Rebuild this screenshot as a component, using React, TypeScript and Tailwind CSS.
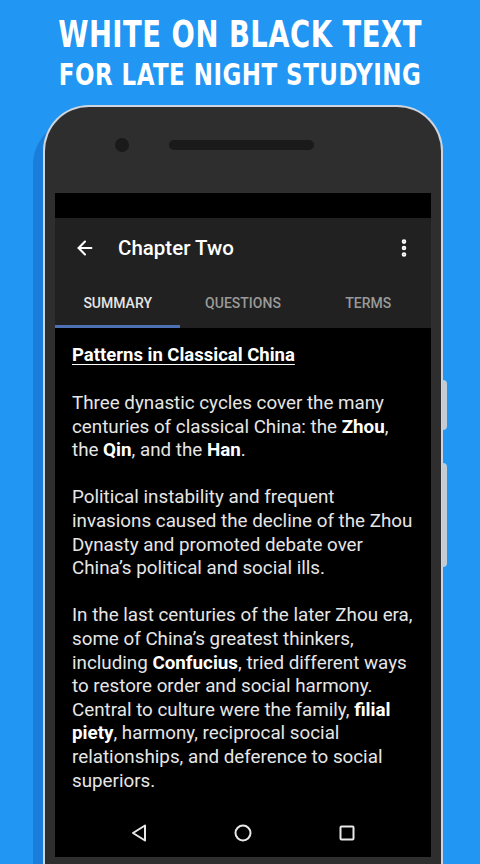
import { ArrowLeft, EllipsisVertical } from 'lucide-react';

const body = { fontFamily: 'Roboto, "Noto Sans", sans-serif' };

function NavBar() {
    return (
        <div className="h-[48px] flex items-center justify-center">
            <div className="w-[104px] flex justify-center">
                <svg width="18" height="20" viewBox="0 0 18 20">
                    <path d="M15 2.5 L3 10 L15 17.5 Z" fill="none" stroke="#e8e8e8" strokeWidth="2" strokeLinejoin="round" />
                </svg>
            </div>
            <div className="w-[104px] flex justify-center">
                <svg width="20" height="20" viewBox="0 0 20 20">
                    <circle cx="10" cy="10" r="7.5" fill="none" stroke="#e8e8e8" strokeWidth="2" />
                </svg>
            </div>
            <div className="w-[104px] flex justify-center">
                <svg width="18" height="18" viewBox="0 0 18 18">
                    <rect x="2.5" y="2.5" width="13" height="13" rx="1" fill="none" stroke="#e8e8e8" strokeWidth="2" />
                </svg>
            </div>
        </div>
    );
}

export default function App() {
    return (
        <div className="w-[480px] h-[864px] overflow-hidden bg-[#2196f3] flex flex-col items-center">
            <h1
                className="pt-[17px] text-white text-center font-bold uppercase"
                style={{ fontFamily: '"DejaVu Sans Condensed", "DejaVu Sans", sans-serif' }}
            >
                <div className="text-[30.5px] leading-[34px] tracking-[0.5px] scale-y-[1.25]">White on Black Text</div>
                <div className="mt-[8px] text-[25.5px] leading-[30px] tracking-[0.5px] scale-y-[1.18]">
                    For Late Night Studying
                </div>
            </h1>

            <div className="relative ml-[6px] mt-[16px] w-[400px] flex-1 rounded-t-[46px] border-2 border-b-0 border-[#cdd6e0] bg-[#2e2e2e] px-[10px] shadow-[-10px_14px_0_0_rgba(13,71,161,0.3)]">
                {/* side buttons */}
                <div className="absolute right-[-6px] top-[273px] w-[5px] h-[50px] rounded-r-sm bg-[#c3cbd4]" />
                <div className="absolute right-[-6px] top-[356px] w-[5px] h-[104px] rounded-r-sm bg-[#c3cbd4]" />

                <div className="h-[86px] flex items-start pt-[31px]">
                    <div className="ml-[60px] w-[14px] h-[14px] rounded-full bg-[#1a1a1a]" />
                    <div className="ml-[40px] mt-[2px] w-[145px] h-[10px] rounded-full bg-[#1a1a1a]" />
                </div>

                <div className="h-[664px] bg-black flex flex-col" style={body}>
                    <div className="h-[25px] bg-black" />
                    <div className="bg-[#212121]">
                        <div className="h-[60px] flex items-center pl-[19px] pr-[16px] text-white">
                            <ArrowLeft size={22} strokeWidth={2.25} />
                            <span className="ml-[22px] text-[20.5px] font-medium">Chapter Two</span>
                            <EllipsisVertical size={22} strokeWidth={3} className="ml-auto" />
                        </div>
                        <div className="h-[50px] grid grid-cols-3 text-[14px] font-medium">
                            <div className="flex flex-col">
                                <div className="flex-1 flex items-center justify-center pt-[4px] text-[#e6e6e6]">SUMMARY</div>
                                <div className="h-[3px] bg-[#4d6fb3]" />
                            </div>
                            <div className="flex items-center justify-center pt-[1px] text-[#9a9a9a]">QUESTIONS</div>
                            <div className="flex items-center justify-center pt-[1px] text-[#9a9a9a]">TERMS</div>
                        </div>
                    </div>

                    <div className="flex-1 pl-[17px] pt-[15px] text-[#e6e6e6] whitespace-nowrap">
                        <div className="text-[18.5px] leading-[24px] font-bold text-white underline underline-offset-[3px]">
                            Patterns in Classical China
                        </div>
                        <div className="mt-[25px] text-[18.8px] leading-[23.6px]">
                            <p>
                                Three dynastic cycles cover the many
                                <br />
                                centuries of classical China: the <b className="text-white">Zhou</b>,
                                <br />
                                the <b className="text-white">Qin</b>, and the <b className="text-white">Han</b>.
                            </p>
                            <p className="mt-[23.6px]">
                                Political instability and frequent
                                <br />
                                invasions caused the decline of the Zhou
                                <br />
                                Dynasty and promoted debate over
                                <br />
                                China’s political and social ills.
                            </p>
                            <p className="mt-[23.6px]">
                                In the last centuries of the later Zhou era,
                                <br />
                                some of China’s greatest thinkers,
                                <br />
                                including <b className="text-white">Confucius</b>, tried different ways
                                <br />
                                to restore order and social harmony.
                                <br />
                                Central to culture were the family, <b className="text-white">filial</b>
                                <br />
                                <b className="text-white">piety</b>, harmony, reciprocal social
                                <br />
                                relationships, and deference to social
                                <br />
                                superiors.
                            </p>
                        </div>
                    </div>

                    <NavBar />
                </div>
            </div>
        </div>
    );
}
